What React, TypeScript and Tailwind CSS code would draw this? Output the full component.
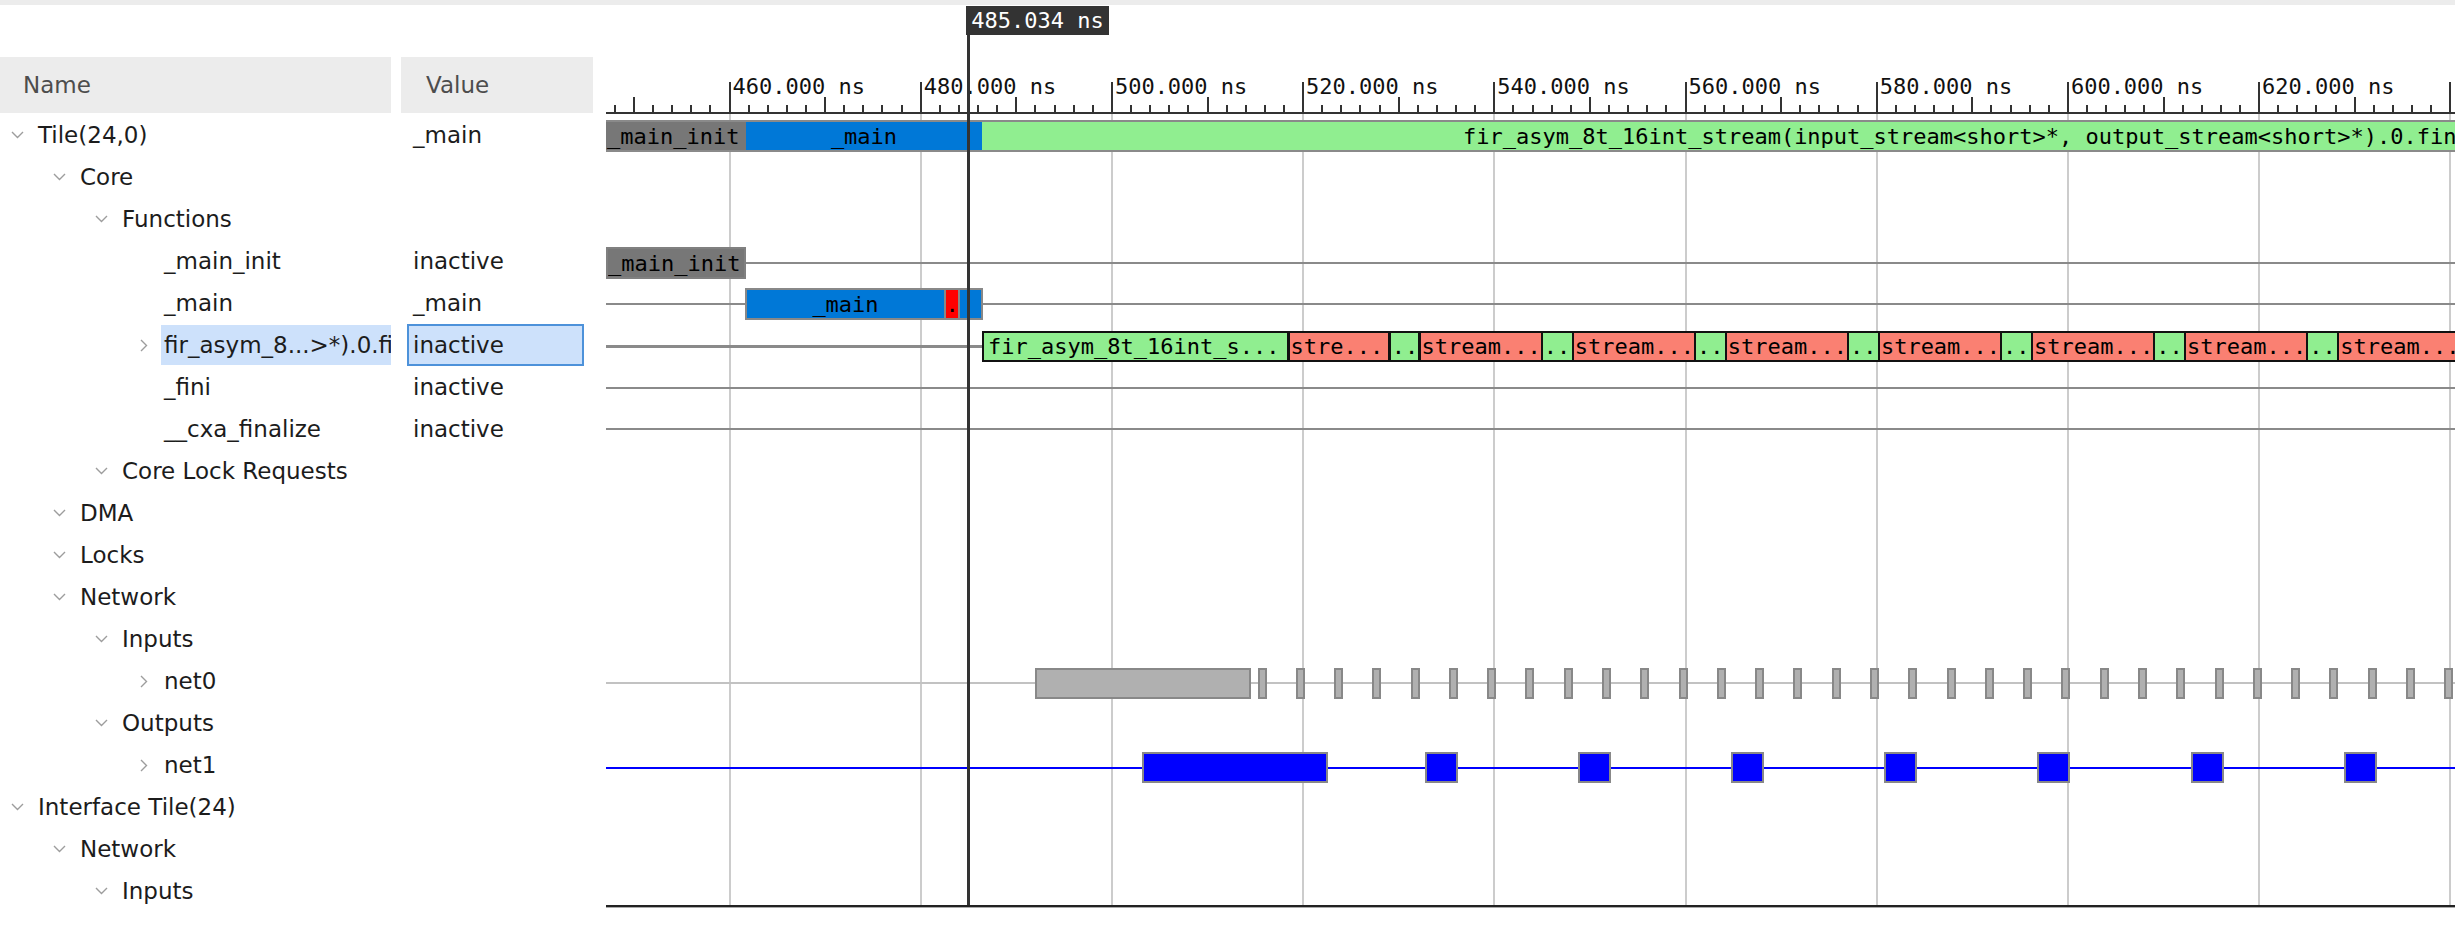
import React from "react";

// timeline starts at this page x; every block below is given in page x
const LEFT = 606;
const MAJOR0 = 123.5; // x of the 460 ns tick inside the timeline
const MAJOR_STEP = 191.2; // 20 ns

type Row = {
  name: string;
  level: number;
  value?: string;
  chevron?: "down" | "right";
  selected?: boolean;
};

const rows: Row[] = [
  { name: "Tile(24,0)", level: 0, value: "_main", chevron: "down" },
  { name: "Core", level: 1, chevron: "down" },
  { name: "Functions", level: 2, chevron: "down" },
  { name: "_main_init", level: 3, value: "inactive" },
  { name: "_main", level: 3, value: "_main" },
  { name: "fir_asym_8...>*).0.fi", level: 3, value: "inactive", chevron: "right", selected: true },
  { name: "_fini", level: 3, value: "inactive" },
  { name: "__cxa_finalize", level: 3, value: "inactive" },
  { name: "Core Lock Requests", level: 2, chevron: "down" },
  { name: "DMA", level: 1, chevron: "down" },
  { name: "Locks", level: 1, chevron: "down" },
  { name: "Network", level: 1, chevron: "down" },
  { name: "Inputs", level: 2, chevron: "down" },
  { name: "net0", level: 3, chevron: "right" },
  { name: "Outputs", level: 2, chevron: "down" },
  { name: "net1", level: 3, chevron: "right" },
  { name: "Interface Tile(24)", level: 0, chevron: "down" },
  { name: "Network", level: 1, chevron: "down" },
  { name: "Inputs", level: 2, chevron: "down" },
];

const indent = ["pl-0", "pl-[42px]", "pl-[84px]", "pl-[126px]"];

type Blk = { x0: number; x1: number; cls: string; text?: string; center?: boolean; pad?: number };

const FIR_TEXT = "fir_asym_8t_16int_stream(input_stream<short>*, output_stream<short>*).0.finalize";

const tileBlocks: Blk[] = [
  { x0: 606, x1: 746, cls: "top-[6px] h-[32px] border-y-2 border-[#8a8a8a] bg-[#777777]", text: "_main_init", pad: 1 },
  { x0: 746, x1: 982, cls: "top-[6px] h-[32px] border-y-2 border-[#8a8a8a] bg-[#0078d7]", text: "_main", center: true },
  { x0: 982, x1: 2480, cls: "top-[6px] h-[32px] border-y-2 border-[#8a8a8a] bg-[#90ee90]", text: FIR_TEXT, pad: 481 },
];

const mainInitBlocks: Blk[] = [
  { x0: 606, x1: 746, cls: "top-[7px] h-[32px] border-2 border-[#808080] bg-[#777777]", text: "_main_init", pad: 0 },
];

const mainBlocks: Blk[] = [
  { x0: 745, x1: 946, cls: "top-[6px] h-[32px] border-2 border-[#888888] bg-[#0078d7]", text: "_main", center: true },
  { x0: 944, x1: 960, cls: "top-[6px] h-[32px] border-2 border-[#888888] bg-[#ff0000]", text: ".", center: true },
  { x0: 958, x1: 983, cls: "top-[6px] h-[32px] border-2 border-[#888888] bg-[#0078d7]" },
];

const firBlocks: Blk[] = [
  { x0: 982, x1: 1289, cls: "top-[7px] h-[31px] border-2 border-[#111111] bg-[#90ee90]", text: "fir_asym_8t_16int_s...", pad: 4 },
  { x0: 1287.5, x1: 1390, cls: "top-[7px] h-[31px] border-2 border-[#111111] bg-[#fa8072]", text: "stre...", pad: 1 },
  { x0: 1388.7, x1: 1420, cls: "top-[7px] h-[31px] border-2 border-[#111111] bg-[#90ee90]", text: "..", pad: 1 },
];
for (let i = 0; i < 7; i++) {
  const s = 1418.6 + 153.1 * i;
  firBlocks.push({ x0: s, x1: s + 124, cls: "top-[7px] h-[31px] border-2 border-[#111111] bg-[#fa8072]", text: "stream...", pad: 1 });
  firBlocks.push({ x0: s + 122.2, x1: s + 155, cls: "top-[7px] h-[31px] border-2 border-[#111111] bg-[#90ee90]", text: "..", pad: 1 });
}

const net0Blocks: Blk[] = [{ x0: 1035, x1: 1251, cls: "top-[8px] h-[31px] border-2 border-[#888888] bg-[#b0b0b0]" }];
for (let k = 0; k < 32; k++) {
  const c = 1262 + 38.28 * k;
  net0Blocks.push({ x0: c - 4.5, x1: c + 4.5, cls: "top-[8px] h-[31px] border-2 border-[#888888] bg-[#b0b0b0]" });
}

const net1Blocks: Blk[] = [{ x0: 1142, x1: 1328, cls: "top-[8px] h-[31px] border-2 border-[#888888] bg-[#0000ff]" }];
for (let i = 0; i < 7; i++) {
  const s = 1425 + 153.1 * i;
  net1Blocks.push({ x0: s, x1: s + 33, cls: "top-[8px] h-[31px] border-2 border-[#888888] bg-[#0000ff]" });
}

type Track = { line?: string; blocks?: Blk[] };

const tracks: Record<number, Track> = {
  0: { blocks: tileBlocks },
  3: { line: "top-[22px] h-[2px] bg-[#8a8a8a]", blocks: mainInitBlocks },
  4: { line: "top-[21px] h-[2px] bg-[#8a8a8a]", blocks: mainBlocks },
  5: { line: "top-[21px] h-[3px] bg-[#8a8a8a]", blocks: firBlocks },
  6: { line: "top-[21px] h-[2px] bg-[#8a8a8a]" },
  7: { line: "top-[20px] h-[2px] bg-[#8a8a8a]" },
  13: { line: "top-[22px] h-[2px] bg-[#c2c2c2]", blocks: net0Blocks },
  15: { line: "top-[23px] h-[2px] bg-[#0000ff]", blocks: net1Blocks },
};

function Chevron({ dir }: { dir: "down" | "right" }) {
  if (dir === "down") {
    return (
      <svg width="13" height="8" viewBox="0 0 13 8" className="block">
        <polyline points="1,1 6.5,6.5 12,1" fill="none" stroke="#9d9d9d" strokeWidth="1.4" />
      </svg>
    );
  }
  return (
    <svg width="8" height="13" viewBox="0 0 8 13" className="block">
      <polyline points="1,1 6.5,6.5 1,12" fill="none" stroke="#9d9d9d" strokeWidth="1.4" />
    </svg>
  );
}

function Block({ b }: { b: Blk }) {
  return (
    <div
      className={`absolute flex items-center overflow-hidden whitespace-nowrap text-black ${b.center ? "justify-center" : ""} ${b.cls}`}
      style={{ left: b.x0 - LEFT, width: b.x1 - b.x0, paddingLeft: b.pad }}
    >
      {b.text}
    </div>
  );
}

function Ruler() {
  const ticks = [];
  const step = MAJOR_STEP / 10;
  for (let k = -6; MAJOR0 + k * step < 1849; k++) {
    const m = ((k % 10) + 10) % 10;
    const h = m === 0 ? "h-[30px]" : m === 5 ? "h-[15px]" : "h-[7px]";
    ticks.push(
      <div key={k} className={`absolute bottom-0 w-[2px] bg-[#333333] ${h}`} style={{ left: MAJOR0 + k * step - 1 }} />
    );
  }
  const labels = [];
  for (let k = 0; k < 9; k++) {
    labels.push(
      <div key={k} className="absolute top-[72px] h-[20px] leading-[20px] text-[#111111]" style={{ left: MAJOR0 + k * MAJOR_STEP + 3 }}>
        {(460 + 20 * k).toFixed(3)} ns
      </div>
    );
  }
  return (
    <div className="relative h-[109px] border-b-2 border-[#333333]">
      {ticks}
      {labels}
      <div className="absolute left-[360px] top-[1px] flex h-[29px] w-[143px] items-center justify-center bg-[#333333] text-white">
        485.034 ns
      </div>
    </div>
  );
}

export default function App() {
  const grid = [];
  for (let k = 0; k < 10; k++) {
    grid.push(<div key={k} className="absolute top-0 h-full w-[2px] bg-[#cccccc]" style={{ left: MAJOR0 + k * MAJOR_STEP - 1 }} />);
  }

  return (
    <div className="h-[936px] w-[2455px] overflow-hidden bg-white font-['DejaVu_Sans',sans-serif] text-[23px] text-[#1c1c1c]">
      <div className="h-[5px] bg-[#ececec]" />

      <div className="flex">
        {/* tree + value columns */}
        <div className="w-[606px] shrink-0">
          <div className="mb-[1px] mt-[52px] flex h-[56px] text-[#4d4d4d]">
            <div className="flex w-[391px] items-center bg-[#ececec] pl-[23px]">Name</div>
            <div className="ml-[10px] flex w-[192px] items-center bg-[#ececec] pl-[25px]">Value</div>
          </div>

          {rows.map((r, i) => (
            <div key={i} className="flex h-[42px] items-center">
              <div className={`flex h-full w-[391px] shrink-0 items-center overflow-hidden ${indent[r.level]}`}>
                <div className="flex w-[35px] shrink-0 justify-center">{r.chevron && <Chevron dir={r.chevron} />}</div>
                <div className={`flex h-[40px] flex-1 items-center whitespace-nowrap pl-[3px] ${r.selected ? "bg-[#cde1fb]" : ""}`}>
                  {r.name}
                </div>
              </div>
              <div
                className={`ml-[16px] flex h-[42px] w-[177px] items-center border-2 pl-[4px] ${
                  r.selected ? "border-[#4d92da] bg-[#cde1fb]" : "border-transparent"
                }`}
              >
                {r.value}
              </div>
            </div>
          ))}
        </div>

        {/* waveform view */}
        <div className="relative flex-1 overflow-hidden font-['DejaVu_Sans_Mono',monospace] text-[22px]">
          <Ruler />

          <div className="relative h-[791px] overflow-hidden">
            {grid}
            {rows.map((_, i) => {
              const t = tracks[i];
              return (
                <div key={i} className="relative h-[42px]">
                  {t?.line && <div className={`absolute left-0 right-0 ${t.line}`} />}
                  {t?.blocks?.map((b, j) => <Block key={j} b={b} />)}
                </div>
              );
            })}
          </div>
          <div className="h-[2px] bg-[#222222]" />
          <div className="h-[1px] bg-[#aaaaaa]" />

          <div className="absolute left-[361px] top-[30px] z-10 h-[870px] w-[3px] bg-[#333333]" />
        </div>
      </div>
    </div>
  );
}
